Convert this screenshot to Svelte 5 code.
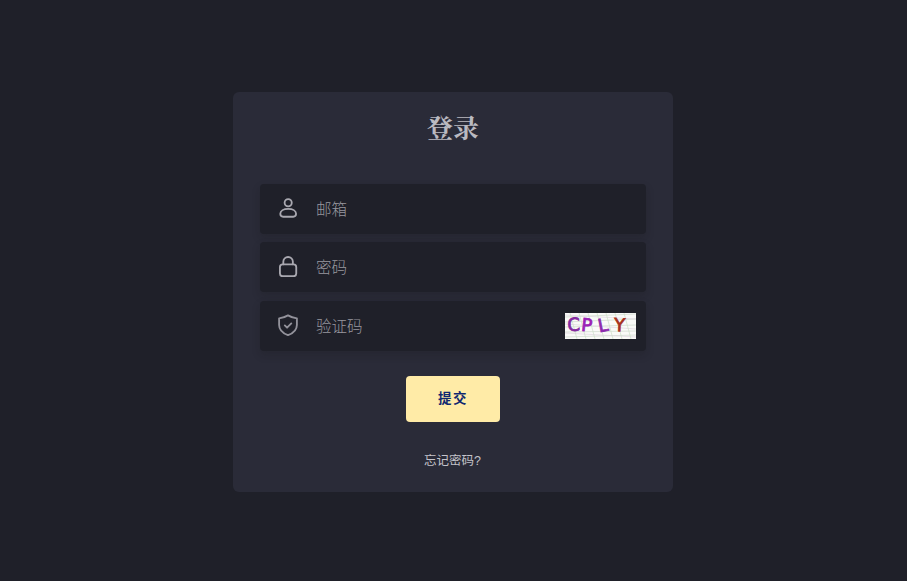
<script>
  const fields = [
    { icon: 'user', label: '邮箱', type: 'text' },
    { icon: 'lock', label: '密码', type: 'password' },
    { icon: 'shield', label: '验证码', type: 'text' }
  ];
</script>

<main>
  <form class="card">
    <h1>登录</h1>
    <div class="fields">
      {#each fields as field}
        <label class="field">
          <svg class="icon {field.icon}" viewBox="0 0 24 24" aria-hidden="true">
            {#if field.icon === 'user'}
              <circle cx="12.2" cy="6.3" r="3.9" />
              <path d="M3.6 18.4c0-3.4 3.7-5.5 8.6-5.5s8.6 2.1 8.6 5.5c0 1.9-1.2 3.1-3.1 3.1h-11c-1.9 0-3.1-1.2-3.1-3.1Z" />
            {:else if field.icon === 'lock'}
              <rect x="3.2" y="10.2" width="17.8" height="13" rx="3" />
              <path d="M6.9 10.2V7.4a5.2 5.2 0 0 1 10.4 0v2.8" />
            {:else}
              <path d="M12 1.5c2.8 1.8 5.8 2.8 9.7 3.2v7.2c0 5.3-3.5 8.8-9.7 11.2-6.2-2.4-9.7-5.9-9.7-11.2V4.7C6.2 4.3 9.2 3.3 12 1.5Z" />
              <path d="m8.5 12.4 2.5 2.5 4.6-4.6" />
            {/if}
          </svg>
          <input type={field.type} placeholder={field.label} />
          {#if field.icon === 'shield'}
            <svg class="captcha" viewBox="0 0 71 26">
              <rect width="71" height="26" fill="#fafaf8" />
              <g fill="none" stroke-width=".7">
                <path stroke="#cfdacb" d="M0 4l71-3M0 9l71-3M0 14l71-2M0 19l71-1M0 24l71-2" />
                <path stroke="#dfd5df" d="M0 2l71 4M0 11l71 5M0 20l71 4" />
                <path stroke="#cddfc9" d="M5 0l7 26M14 0l7 26M23 0l7 26M32 0l7 26M41 0l7 26M50 0l7 26M59 0l7 26" />
              </g>
              <g class="letters">
                <text x="2.5" y="18" fill="#852aa0" stroke="#852aa0" transform="rotate(-3 9 12)">C</text>
                <text x="16.5" y="18.3" fill="#9b21b6" stroke="#9b21b6" transform="rotate(6 22 12)">P</text>
                <text x="33" y="18.3" fill="#8d2aae" stroke="#8d2aae" transform="rotate(-11 38 12)">L</text>
                <text x="49" y="18.3" fill="#a8301b" stroke="#a8301b" transform="rotate(3 54 12)">Y</text>
              </g>
            </svg>
          {/if}
        </label>
      {/each}
    </div>
    <button type="button">提交</button>
    <a href="#forgot">忘记密码?</a>
  </form>
</main>

<style>
  :global(body) {
    background: #1f2029;
  }
  main {
    box-sizing: border-box;
    height: 581px;
    padding: 92px 1px 0 0;
    display: flex;
    justify-content: center;
    align-items: flex-start;
    overflow: hidden;
    font-family: "Liberation Sans", "Noto Sans CJK SC", sans-serif;
  }
  .card {
    box-sizing: border-box;
    width: 440px;
    height: 400px;
    padding: 17px 27px 0;
    border-radius: 6px;
    background: #2a2b38;
    display: flex;
    flex-direction: column;
    align-items: center;
  }
  h1 {
    margin: 0 0 39.5px;
    height: 35px;
    line-height: 35px;
    font-family: "Noto Serif CJK SC", "Noto Sans CJK SC", serif;
    font-size: 26px;
    font-weight: 700;
    color: #bab9c0;
  }
  .fields {
    align-self: stretch;
    display: grid;
    gap: 8.5px;
  }
  .field {
    box-sizing: border-box;
    height: 50px;
    padding: 0 10px 0 17px;
    display: flex;
    align-items: center;
    border-radius: 4px;
    background: #1f2029;
    box-shadow: 0 4px 8px rgba(21, 21, 21, .2);
  }
  .icon {
    width: 22px;
    height: 22px;
    flex: none;
    margin-bottom: 2px;
    fill: none;
    stroke: #a9a8b0;
    stroke-width: 2;
    stroke-linecap: round;
    stroke-linejoin: round;
  }
  .shield {
    stroke: #93929b;
  }
  input {
    flex: 1;
    min-width: 0;
    height: 40px;
    margin: 2px 0 0 17px;
    padding: 0;
    border: 0;
    outline: 0;
    background: transparent;
    color: #c4c3ca;
    font: 300 15.5px "Liberation Sans", "Noto Sans CJK SC", sans-serif;
  }
  input::placeholder {
    color: #98979f;
    opacity: 1;
  }
  .captcha {
    width: 71px;
    height: 26px;
    flex: none;
  }
  .letters {
    font: 400 18px "DejaVu Sans", sans-serif;
    stroke-width: .8;
  }
  button {
    width: 94px;
    height: 46px;
    margin: 25px 0 28px;
    padding: 0 0 3px;
    border: 0;
    border-radius: 4px;
    background: #ffeba7;
    color: #102770;
    font: 700 13.5px "Noto Sans CJK SC", sans-serif;
    letter-spacing: 1.5px;
  }
  a {
    height: 22px;
    margin-right: 1px;
    line-height: 22px;
    font-size: 12.5px;
    color: #c4c3ca;
    text-decoration: none;
  }
</style>
